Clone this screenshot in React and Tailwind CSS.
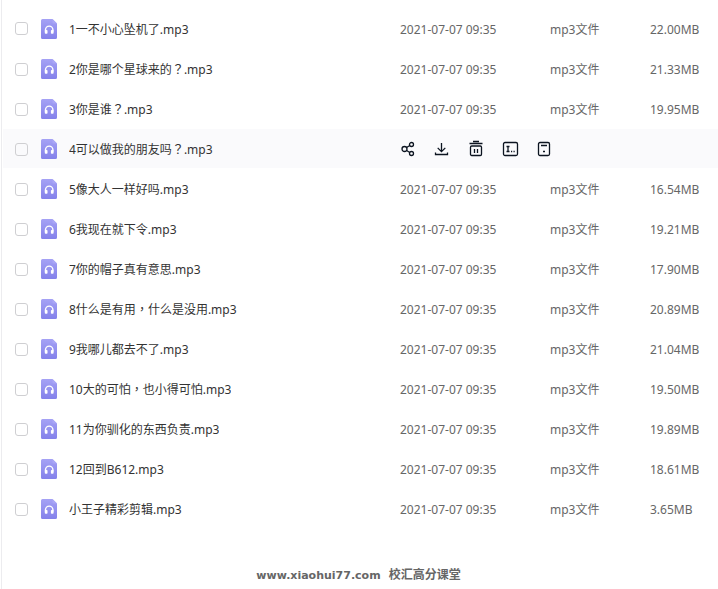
import { useState } from 'react'

const files = [
  { name: '1一不小心坠机了.mp3', size: '22.00MB' },
  { name: '2你是哪个星球来的？.mp3', size: '21.33MB' },
  { name: '3你是谁？.mp3', size: '19.95MB' },
  { name: '4可以做我的朋友吗？.mp3', size: '', active: true },
  { name: '5像大人一样好吗.mp3', size: '16.54MB' },
  { name: '6我现在就下令.mp3', size: '19.21MB' },
  { name: '7你的帽子真有意思.mp3', size: '17.90MB' },
  { name: '8什么是有用，什么是没用.mp3', size: '20.89MB' },
  { name: '9我哪儿都去不了.mp3', size: '21.04MB' },
  { name: '10大的可怕，也小得可怕.mp3', size: '19.50MB' },
  { name: '11为你驯化的东西负责.mp3', size: '19.89MB' },
  { name: '12回到B612.mp3', size: '18.61MB' },
  { name: '小王子精彩剪辑.mp3', size: '3.65MB' },
]

function AudioFileIcon() {
  return (
    <svg width="16" height="20" viewBox="0 0 16 20" className="shrink-0" aria-hidden="true">
      <defs>
        <linearGradient id="audio-bg" x1="0" y1="0" x2="0" y2="1">
          <stop offset="0" stopColor="#a5a2f5" />
          <stop offset="1" stopColor="#8481ea" />
        </linearGradient>
      </defs>
      <path d="M1.500 0h10L16 4.500V18.500a1.500 1.500 0 0 1-1.500 1.500h-13A1.500 1.500 0 0 1 0 18.500v-17A1.500 1.500 0 0 1 1.500 0z" fill="url(#audio-bg)" />
      <path d="M11.500 0L16 4.500h-3.500a1 1 0 0 1-1-1z" fill="#aaa7f6" />
      <path d="M4.500 12.500v-1.700a3.700 3.700 0 0 1 7.400 0v1.700" fill="none" stroke="#fff" strokeWidth="1.400" />
      <rect x="3.800" y="11" width="2.700" height="3.800" rx="0.800" fill="#fff" />
      <rect x="9.900" y="11" width="2.700" height="3.800" rx="0.800" fill="#fff" />
    </svg>
  )
}

const actions = [
  {
    label: '分享',
    icon: (
      <>
        <circle cx="4.500" cy="8" r="2.500" />
        <circle cx="11.500" cy="3.500" r="2" />
        <circle cx="11.500" cy="12.500" r="2" />
        <path d="M6.600 6.500l3.200-2M6.600 9.500l3.200 2" />
      </>
    ),
  },
  {
    label: '下载',
    icon: <path d="M7.500 2v8.500M3.700 6.900l3.800 3.800 3.800-3.800M1.500 11.500v2h12v-2" />,
  },
  {
    label: '删除',
    icon: (
      <>
        <path d="M5 0.500h6M1.500 2.500h13M6.500 8v4M9.500 8v4" />
        <rect x="2.500" y="5" width="11" height="9.500" rx="1.200" />
      </>
    ),
  },
  {
    label: '重命名',
    icon: (
      <>
        <rect x="1.500" y="1.500" width="14" height="13" rx="1.500" />
        <path d="M4.500 5.500h3M6 5.500v5M4.500 10.500h3M9 10.500h1.200M11.500 10.500h1.200" />
      </>
    ),
  },
  {
    label: '移动',
    icon: (
      <>
        <rect x="2.500" y="1.500" width="11" height="13" rx="1.500" />
        <path d="M5 4.500h6M7 10.500h2" />
      </>
    ),
  },
]

function Toolbar() {
  return (
    <div className="flex items-center gap-[18px]">
      {actions.map(action => (
        <button key={action.label} type="button" aria-label={action.label} className="cursor-pointer text-[#0c1420]">
          <svg
            width="16"
            height="16"
            viewBox="0 0 16 16"
            fill="none"
            stroke="currentColor"
            strokeWidth="1.300"
            className="block overflow-visible"
          >
            {action.icon}
          </svg>
        </button>
      ))}
    </div>
  )
}

// Full-width punctuation sits in the middle of its box in the TC face
function FileName({ name }) {
  return name.split(/([？，])/).map((part, i) => (
    i % 2 ? <span key={i} lang="zh-TW" className="font-['Noto_Sans_CJK_TC',sans-serif] leading-none">{part}</span> : part
  ))
}

export default function App() {
  const [selected, setSelected] = useState([])

  const toggle = name => {
    setSelected(prev => (prev.includes(name) ? prev.filter(n => n !== name) : [...prev, name]))
  }

  return (
    <div className="min-h-screen bg-white pl-px font-['Noto_Sans','Noto_Sans_CJK_SC',sans-serif] text-xs">
      <div className="min-h-screen border-l border-[#ececef] pl-px pt-2">
        <table className="w-full table-fixed border-collapse text-[#666]">
          <colgroup>
            <col />
            <col className="w-[150px]" />
            <col className="w-[100px]" />
            <col className="w-[68px]" />
          </colgroup>
          <tbody>
            {files.map((file, i) => (
              <tr key={file.name} className={`h-10 border-b border-white ${file.active ? 'bg-[#fafafc]' : ''}`}>
                <td className="pl-3 pt-0.5">
                  <div className="flex items-center">
                    <input
                      id={`file-${i}`}
                      type="checkbox"
                      checked={selected.includes(file.name)}
                      onChange={() => toggle(file.name)}
                      className="mr-[13px] size-[13px] shrink-0 appearance-none rounded-[3px] border border-[#cfcfd2] checked:border-[#8481ea] checked:bg-[#8481ea]"
                    />
                    <AudioFileIcon />
                    <label htmlFor={`file-${i}`} className="ml-3 truncate pt-0.5 text-[#333]">
                      <FileName name={file.name} />
                    </label>
                  </div>
                </td>
                {file.active ? (
                  <td colSpan={3} className="pt-0.5"><Toolbar /></td>
                ) : (
                  <>
                    <td className="whitespace-nowrap pt-1">2021-07-07 09:35</td>
                    <td className="pt-1">mp3文件</td>
                    <td className="pt-1">{file.size}</td>
                  </>
                )}
              </tr>
            ))}
          </tbody>
        </table>

        <footer className="flex items-baseline justify-center gap-2 pr-1 pt-[37px] font-bold text-[#666]">
          <span className="font-['DejaVu_Sans',sans-serif] text-[11px]">www.xiaohui77.com</span>
          <span className="font-['Noto_Sans_CJK_SC',sans-serif]">校汇高分课堂</span>
        </footer>
      </div>
    </div>
  )
}
